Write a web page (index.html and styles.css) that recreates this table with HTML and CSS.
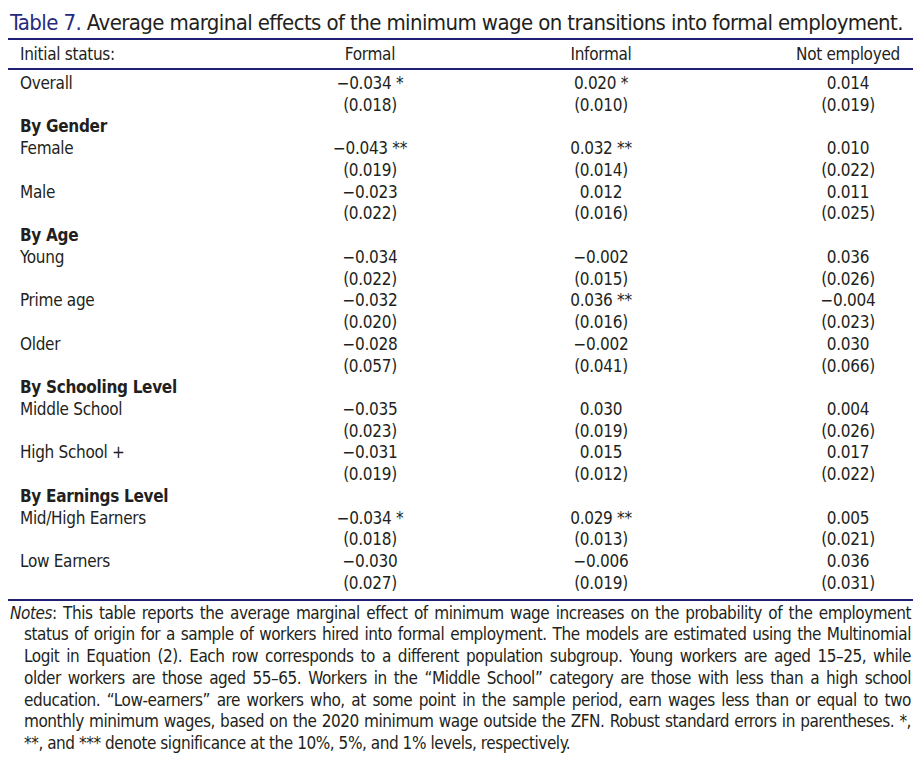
FILE: index.html
```html
<!DOCTYPE html>
<html lang="en">
<head>
<meta charset="utf-8">
<title>Table 7</title>
<link rel="stylesheet" href="styles.css">
</head>
<body>
<div class="page">
  <h1 class="title"><span class="label">Table 7.</span> Average marginal effects of the minimum wage on transitions into formal employment.</h1>
  <div class="table">
    <div class="row head">
      <div class="lab">Initial status:</div>
      <div class="c1">Formal</div>
      <div class="c2">Informal</div>
      <div class="c3">Not employed</div>
    </div>
    <div class="body">
      <div class="row"><div class="lab">Overall</div><div class="c1">−0.034 *</div><div class="c2">0.020 *</div><div class="c3">0.014</div></div>
      <div class="row"><div class="lab"></div><div class="c1">(0.018)</div><div class="c2">(0.010)</div><div class="c3">(0.019)</div></div>
      <div class="row"><div class="lab grp">By Gender</div></div>
      <div class="row"><div class="lab">Female</div><div class="c1">−0.043 **</div><div class="c2">0.032 **</div><div class="c3">0.010</div></div>
      <div class="row"><div class="lab"></div><div class="c1">(0.019)</div><div class="c2">(0.014)</div><div class="c3">(0.022)</div></div>
      <div class="row"><div class="lab">Male</div><div class="c1">−0.023</div><div class="c2">0.012</div><div class="c3">0.011</div></div>
      <div class="row"><div class="lab"></div><div class="c1">(0.022)</div><div class="c2">(0.016)</div><div class="c3">(0.025)</div></div>
      <div class="row"><div class="lab grp">By Age</div></div>
      <div class="row"><div class="lab">Young</div><div class="c1">−0.034</div><div class="c2">−0.002</div><div class="c3">0.036</div></div>
      <div class="row"><div class="lab"></div><div class="c1">(0.022)</div><div class="c2">(0.015)</div><div class="c3">(0.026)</div></div>
      <div class="row"><div class="lab">Prime age</div><div class="c1">−0.032</div><div class="c2">0.036 **</div><div class="c3">−0.004</div></div>
      <div class="row"><div class="lab"></div><div class="c1">(0.020)</div><div class="c2">(0.016)</div><div class="c3">(0.023)</div></div>
      <div class="row"><div class="lab">Older</div><div class="c1">−0.028</div><div class="c2">−0.002</div><div class="c3">0.030</div></div>
      <div class="row"><div class="lab"></div><div class="c1">(0.057)</div><div class="c2">(0.041)</div><div class="c3">(0.066)</div></div>
      <div class="row"><div class="lab grp">By Schooling Level</div></div>
      <div class="row"><div class="lab">Middle School</div><div class="c1">−0.035</div><div class="c2">0.030</div><div class="c3">0.004</div></div>
      <div class="row"><div class="lab"></div><div class="c1">(0.023)</div><div class="c2">(0.019)</div><div class="c3">(0.026)</div></div>
      <div class="row"><div class="lab">High School +</div><div class="c1">−0.031</div><div class="c2">0.015</div><div class="c3">0.017</div></div>
      <div class="row"><div class="lab"></div><div class="c1">(0.019)</div><div class="c2">(0.012)</div><div class="c3">(0.022)</div></div>
      <div class="row"><div class="lab grp">By Earnings Level</div></div>
      <div class="row"><div class="lab">Mid/High Earners</div><div class="c1">−0.034 *</div><div class="c2">0.029 **</div><div class="c3">0.005</div></div>
      <div class="row"><div class="lab"></div><div class="c1">(0.018)</div><div class="c2">(0.013)</div><div class="c3">(0.021)</div></div>
      <div class="row"><div class="lab">Low Earners</div><div class="c1">−0.030</div><div class="c2">−0.006</div><div class="c3">0.036</div></div>
      <div class="row"><div class="lab"></div><div class="c1">(0.027)</div><div class="c2">(0.019)</div><div class="c3">(0.031)</div></div>
    </div>
  </div>
  <p class="notes">
    <span class="ln first"><em>Notes</em>: This table reports the average marginal effect of minimum wage increases on the probability of the employment</span>
    <span class="ln">status of origin for a sample of workers hired into formal employment. The models are estimated using the Multinomial</span>
    <span class="ln">Logit in Equation (2). Each row corresponds to a different population subgroup. Young workers are aged 15–25, while</span>
    <span class="ln">older workers are those aged 55–65. Workers in the “Middle School” category are those with less than a high school</span>
    <span class="ln">education. “Low-earners” are workers who, at some point in the sample period, earn wages less than or equal to two</span>
    <span class="ln">monthly minimum wages, based on the 2020 minimum wage outside the ZFN. Robust standard errors in parentheses. *,</span>
    <span class="ln last">**, and *** denote significance at the 10%, 5%, and 1% levels, respectively.</span>
  </p>
</div>
</body>
</html>
```
FILE: styles.css
```css
html, body {
  margin: 0;
  padding: 0;
  background: #ffffff;
}
body {
  font-family: "DejaVu Sans Condensed", "DejaVu Sans", "Liberation Sans", sans-serif;
  font-stretch: condensed;
  color: #231f20;
  font-size: 17px;
  letter-spacing: -0.3px;
}
.page {
  width: 905px;
  margin-left: 8px;
}
.title {
  margin: 0;
  padding: 9px 0 1px 2px;
  font-size: 22px;
  font-weight: normal;
  line-height: 28px;
  letter-spacing: -0.6px;
  white-space: nowrap;
}
.title .label {
  color: #262a7e;
}
.table {
  border-top: 2px solid #1f1f75;
  border-bottom: 2px solid #1f1f75;
}
.row {
  display: grid;
  grid-template-columns: 252px 220px 242px 1fr;
  line-height: 21.74px;
  height: 21.74px;
}
.head {
  height: 28px;
  line-height: 28px;
  border-bottom: 2px solid #1f1f75;
}
.body {
  padding: 3px 0 4px;
}
.lab {
  padding-left: 12px;
  white-space: nowrap;
}
.grp {
  font-weight: bold;
}
.c1, .c2, .c3 {
  text-align: center;
  white-space: nowrap;
}
.c3 {
  padding-left: 61px;
}
.notes {
  margin: 0;
  padding: 2px 2px 0 16px;
  line-height: 21.74px;
  letter-spacing: -0.45px;
}
.ln {
  display: block;
  white-space: nowrap;
  text-align: justify;
  text-align-last: justify;
}
.ln.first {
  margin-left: -14px;
}
.ln.last {
  text-align: left;
  text-align-last: left;
}
```
